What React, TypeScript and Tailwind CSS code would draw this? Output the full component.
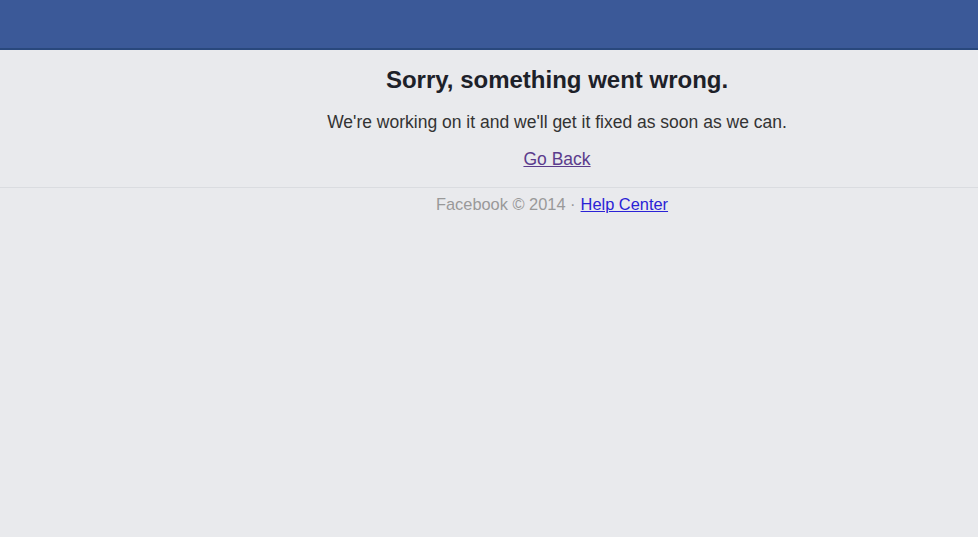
export default function App() {
  return (
    <div className="min-h-[537px] bg-[#e9eaed] font-['Liberation_Sans',Arial,sans-serif]">
      <header className="h-[50px] border-b-2 border-[#29487d] bg-[#3b5998]" />
      <main className="flex flex-col items-center pl-[136px] pt-[16px] text-center">
        <h1 className="text-[24px] font-bold leading-[28px] text-[#1d2129]">Sorry, something went wrong.</h1>
        <p className="mt-[17px] text-[17.5px] leading-[22px] text-[#333]">We're working on it and we'll get it fixed as soon as we can.</p>
        <a href="#" className="mt-[15px] text-[17.5px] leading-[22px] text-[#5b3b8c] underline">Go Back</a>
      </main>
      <div className="mt-[17px] border-t border-[#dadce0] pt-[6px]">
        <div className="flex justify-center pl-[126px] text-[16.4px] leading-[20px]">
          <span className="text-[#999]">Facebook © 2014 · </span>
          <a href="#" className="ml-[5px] text-[#2a22d6] underline">Help Center</a>
        </div>
      </div>
    </div>
  );
}
